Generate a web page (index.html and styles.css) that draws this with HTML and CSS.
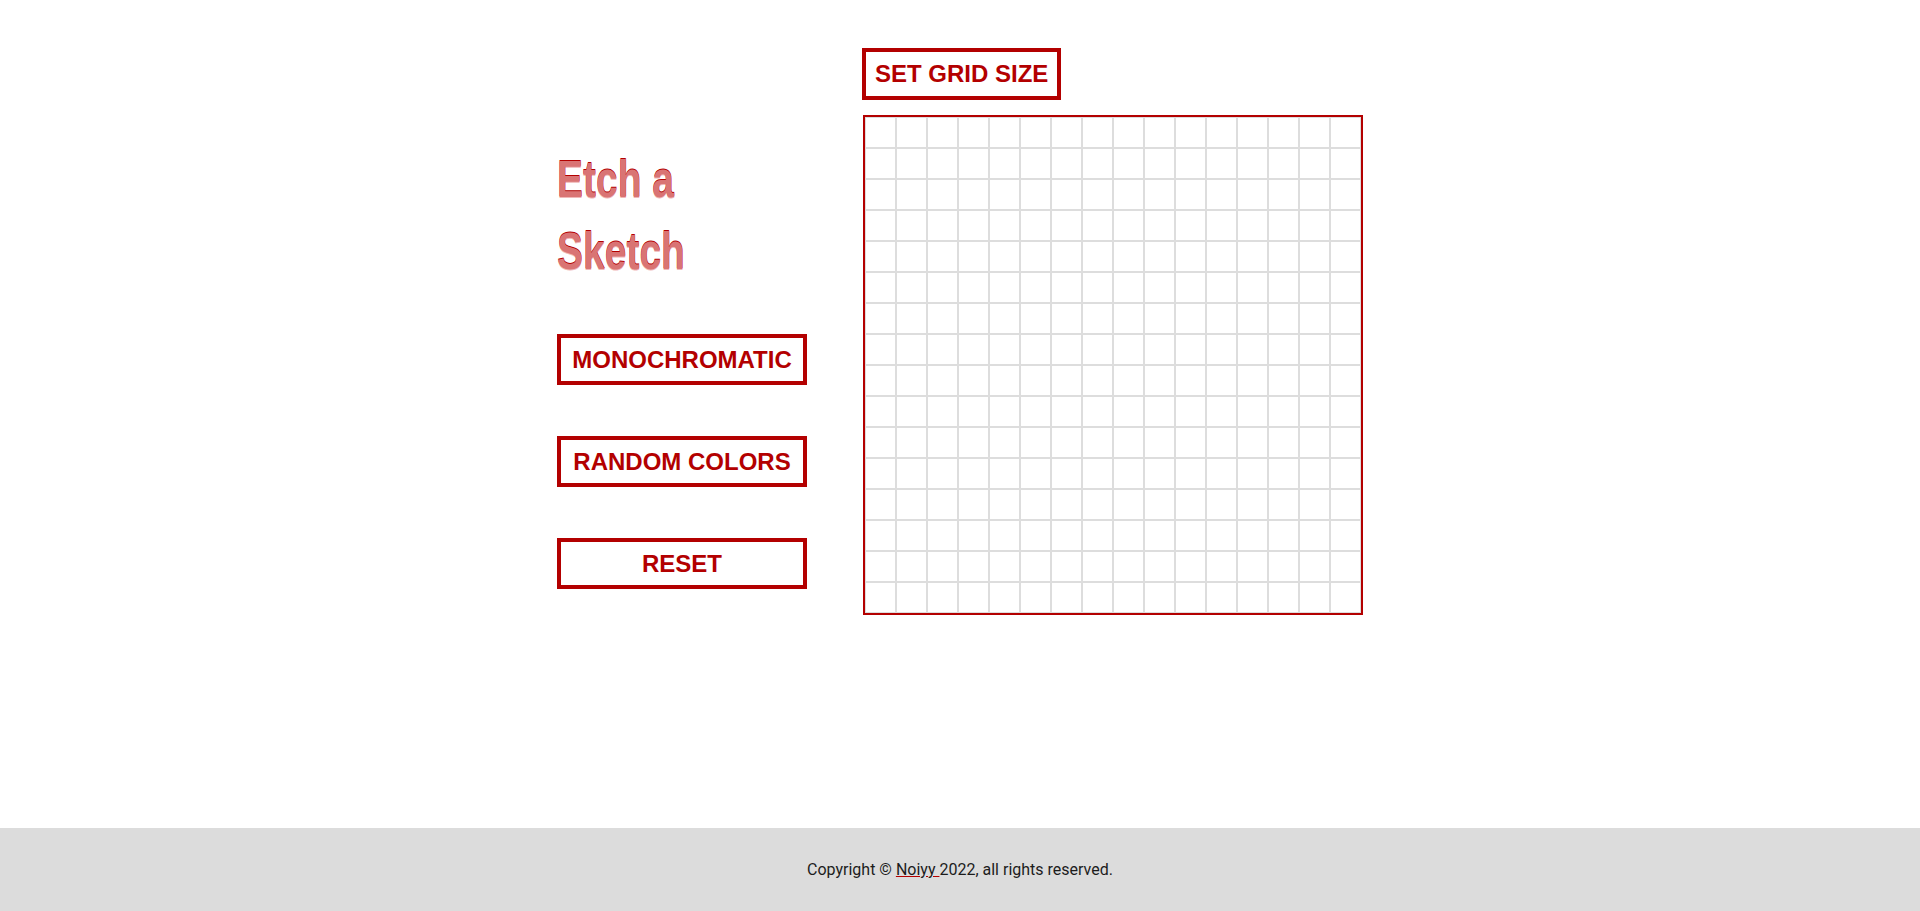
FILE: index.html
```html
<!DOCTYPE html>
<html lang="en">
<head>
<meta charset="utf-8">
<title>Etch a Sketch</title>
<link rel="stylesheet" href="styles.css">
</head>
<body>
<main class="app">
  <section class="controls">
    <h1 class="title">Etch a<br>Sketch</h1>
    <div class="modes">
      <button class="btn btn-wide">MONOCHROMATIC</button>
      <button class="btn btn-wide">RANDOM COLORS</button>
      <button class="btn btn-wide">RESET</button>
    </div>
  </section>
  <section class="board">
    <button class="btn">SET GRID SIZE</button>
    <div class="grid" id="grid"></div>
  </section>
</main>
<footer class="footer">
  <p>Copyright © <a href="#" class="author">Noiyy </a>2022, all rights reserved.</p>
</footer>
<script src="script.js"></script>
</body>
</html>
```

FILE: styles.css
```css
* { box-sizing: border-box; }

html, body {
  margin: 0;
  padding: 0;
  background: #ffffff;
}

body {
  min-height: 100vh;
  display: flex;
  flex-direction: column;
  font-family: "Liberation Sans", Arial, sans-serif;
}

.app {
  flex: 1;
  display: flex;
  justify-content: center;
  align-items: flex-start;
  gap: 55px;
  padding-top: 48px;
}

.controls {
  width: 250px;
  display: flex;
  flex-direction: column;
}

.title {
  align-self: flex-start;
  margin: 95px 0 47px 0;
  font-family: "Liberation Sans", Arial, sans-serif;
  font-weight: 700;
  font-size: 52px;
  line-height: 72px;
  color: #d97474;
  text-shadow: 0 -1.5px 0 #b30000, 0 1px 0 #f0b8b8;
  transform: scaleX(0.75);
  transform-origin: left top;
}

.modes {
  display: flex;
  flex-direction: column;
  gap: 51px;
}

.btn {
  font-family: "Liberation Sans", Arial, sans-serif;
  font-weight: 700;
  font-size: 24px;
  line-height: 28px;
  color: #b30000;
  background: #ffffff;
  border: 4px solid #b30000;
  padding: 8px 9px;
  margin: 0;
  cursor: pointer;
}

.btn-wide {
  width: 250px;
  height: 51px;
  padding-top: 7px;
  padding-bottom: 7px;
  text-align: center;
}

.board {
  display: flex;
  flex-direction: column;
  align-items: flex-start;
  gap: 15px;
}

.grid {
  margin-left: 1px;
  width: 500px;
  height: 500px;
  border: 2px solid #b30000;
  display: grid;
  grid-template-columns: repeat(16, 31px);
  grid-template-rows: repeat(16, 31px);
}

.cell {
  border: 1px solid #dddddd;
  background: #ffffff;
}

.footer {
  height: 83px;
  background: #dcdcdc;
  display: flex;
  align-items: center;
  justify-content: center;
  font-family: Roboto, "Liberation Sans", sans-serif;
  font-size: 16px;
  color: #1c1c1c;
}

.footer p { margin: 0; }

.author {
  color: #1c1c1c;
  text-decoration: underline;
  text-decoration-color: #b30000;
}
```

FILE: script.js
```js
const grid = document.getElementById('grid');
for (let i = 0; i < 256; i++) {
  const cell = document.createElement('div');
  cell.className = 'cell';
  grid.appendChild(cell);
}
```
